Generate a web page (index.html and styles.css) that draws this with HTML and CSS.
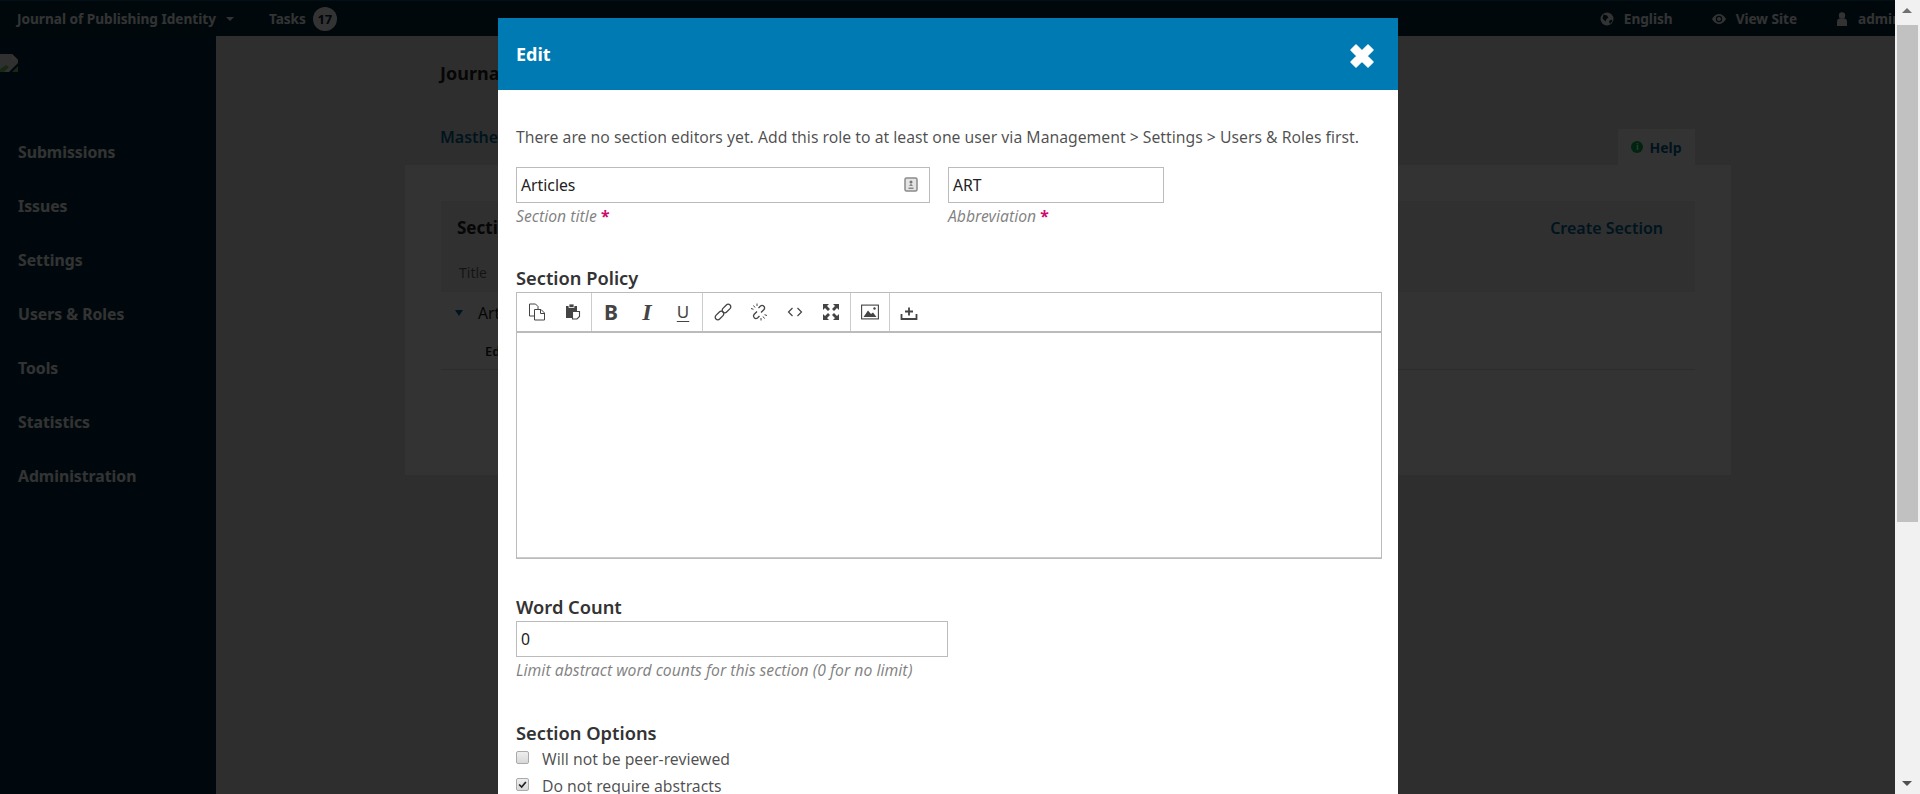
FILE: index.html
```html
<!DOCTYPE html>
<html lang="en">
<head>
    <meta charset="UTF-8">
    <title>Sections - Journal of Publishing Identity</title>
    <link rel="stylesheet" href="styles.css">
</head>
<body>
<div class="window">
    <div class="app">
        <header class="topbar">
            <div class="topbar-left">
                <span class="journal-name">Journal of Publishing Identity</span>
                <span class="caret"></span>
                <span class="tasks">Tasks</span>
                <span class="badge">17</span>
            </div>
            <div class="topbar-right">
                <span class="top-link">
                    <svg class="top-icon" viewBox="0 0 14 14"><circle cx="7" cy="7" r="6.500" fill="#fff"/><path d="M3.500 2.500l3.500 1 1.500 2-2 1.500-1 2.500-3-3zM9 9l2.500-1.500L12.500 9 10 12z" fill="#00293d"/></svg>
                    English
                </span>
                <span class="top-link">
                    <svg class="top-icon" viewBox="0 0 14 14"><path d="M0 7c2-3.500 4.500-5 7-5s5 1.500 7 5c-2 3.500-4.500 5-7 5s-5-1.500-7-5z" fill="#fff"/><circle cx="7" cy="7" r="3.200" fill="#00293d"/><circle cx="7" cy="7" r="2" fill="#fff"/></svg>
                    View Site
                </span>
                <span class="top-link top-link-user">
                    <svg class="top-icon" viewBox="0 0 12 14"><circle cx="6" cy="3.500" r="3.200" fill="#fff"/><path d="M1 14V9.500C1 7.500 2.500 6.500 3.500 6.500h5c1 0 2.500 1 2.500 3V14z" fill="#fff"/></svg>
                    admin
                </span>
            </div>
        </header>
        <div class="below">
            <nav class="sidebar">
                <svg class="broken" viewBox="0 0 18 18"><path d="M0 0h12l6 6v3L9 18H0z" fill="#efefef"/><path d="M0 18v-3l6-4 3 2-5 5zM18 12v6h-6z" fill="#7fc06a"/><path d="M12 0v6h6z" fill="#fff"/></svg>
                <ul class="nav-list">
                    <li>Submissions</li>
                    <li>Issues</li>
                    <li>Settings</li>
                    <li>Users &amp; Roles</li>
                    <li>Tools</li>
                    <li>Statistics</li>
                    <li>Administration</li>
                </ul>
            </nav>
            <main class="content">
                <h1 class="page-title">Journal</h1>
                <div class="tabs">
                    <span class="tab-link">Masthead</span>
                    <span class="help-tab"><span class="help-dot">i</span>Help</span>
                </div>
                <section class="card">
                    <div class="grid-head">
                        <div class="grid-title-row">
                            <strong>Sections</strong>
                            <span class="create-link">Create Section</span>
                        </div>
                        <div class="grid-col">Title</div>
                    </div>
                    <div class="grid-row"><span class="tri"></span>Articles</div>
                    <div class="grid-sub">Edit</div>
                </section>
            </main>
        </div>
        <div class="dim"></div>
        <div class="modal">
            <div class="modal-head">
                <span class="modal-title">Edit</span>
                <svg class="modal-close" viewBox="0 0 26 26"><path d="M7 2l6 6 6-6 5 5-6 6 6 6-5 5-6-6-6 6-5-5 6-6-6-6z" fill="#fff" stroke="#fff" stroke-width="1.500" stroke-linejoin="round"/></svg>
            </div>
            <form class="modal-body">
                <p class="notice">There are no section editors yet. Add this role to at least one user via Management &gt; Settings &gt; Users &amp; Roles first.</p>
                <div class="field-row">
                    <div class="field">
                        <div class="input input-title">Articles
                            <svg class="locale-icon" viewBox="0 0 14 15"><rect x="1" y="1" width="12" height="13" rx="1.500" fill="#e4e4e4" stroke="#8a8a8a" stroke-width="1.500"/><circle cx="7" cy="5" r="1.500" fill="#777"/><path d="M5 9l2-2.500L9 9zM4.500 10.500h5v1.500h-5z" fill="#888"/></svg>
                        </div>
                        <div class="hint">Section title <span class="req">*</span></div>
                    </div>
                    <div class="field">
                        <div class="input input-abbrev">ART</div>
                        <div class="hint">Abbreviation <span class="req">*</span></div>
                    </div>
                </div>

                <h3 class="sub-head head-policy">Section Policy</h3>
                <div class="editor">
                    <div class="toolbar">
                        <div class="tb-group">
                            <span class="tb-btn"><svg viewBox="0 0 18 18"><path d="M1.500 1h6l2.500 2.500v3M1.500 1v12h5M6.500 6.500h6.500l3.500 3.500v7h-10zM12.500 6.500V10.500h4" fill="none" stroke="#444" stroke-width="1"/></svg></span>
                            <span class="tb-btn"><svg viewBox="0 0 18 18"><path d="M2 3h11v5H8v7H2z" fill="#444"/><rect x="5" y="1" width="5" height="3.500" fill="#444" stroke="#fff" stroke-width=".8"/><path d="M8.500 8.500h7v5l-2.500 2.500H8.500z" fill="#fff" stroke="#444" stroke-width="1.100"/></svg></span>
                        </div>
                        <div class="tb-group">
                            <span class="tb-btn tb-text tb-bold">B</span>
                            <span class="tb-btn tb-text tb-italic">I</span>
                            <span class="tb-btn tb-text tb-under">U</span>
                        </div>
                        <div class="tb-group tb-group-wide">
                            <span class="tb-btn"><svg viewBox="0 0 18 18"><g fill="none" stroke="#444" stroke-width="1.300"><rect x="-5" y="-2.600" width="10" height="5.200" rx="2.600" transform="translate(5.500 12.500) rotate(-45)"/><rect x="-5" y="-2.600" width="10" height="5.200" rx="2.600" transform="translate(12.500 5.500) rotate(-45)"/></g></svg></span>
                            <span class="tb-btn"><svg viewBox="0 0 18 18"><g fill="none" stroke="#444" stroke-width="1.300"><path d="M7 8.500l-3 3a2.500 2.500 0 0 0 3.500 3.500l2-2"/><path d="M11 9.500l3-3a2.500 2.500 0 0 0-3.500-3.500l-2 2"/></g><path d="M3.500 2.500l1.500 2M1 5.500l2.500.8M7 .5v2.500M14.500 15.500l-1.500-2M17 12.500l-2.500-.8M11 17.500V15" stroke="#444" stroke-width="1"/></svg></span>
                            <span class="tb-btn"><svg viewBox="0 0 18 18"><path d="M6.500 5L2.500 9l4 4M11.500 5l4 4-4 4" fill="none" stroke="#444" stroke-width="1.200"/></svg></span>
                            <span class="tb-btn"><svg viewBox="0 0 18 18"><path d="M1 1h6L5 3l3 3-2 2-3-3-2 2zM17 1v6l-2-2-3 3-2-2 3-3-2-2zM1 17v-6l2 2 3-3 2 2-3 3 2 2zM17 17h-6l2-2-3-3 2-2 3 3 2-2z" fill="#444"/></svg></span>
                        </div>
                        <div class="tb-group">
                            <span class="tb-btn"><svg viewBox="0 0 18 18"><rect x=".6" y="2.100" width="16.800" height="13.800" fill="none" stroke="#444" stroke-width="1.100"/><path d="M2.500 14l4.500-6.500 3 3.500 2-1.500 3.500 4.500z" fill="#444"/><circle cx="13.500" cy="5.500" r="1.200" fill="#444"/></svg></span>
                        </div>
                        <div class="tb-group">
                            <span class="tb-btn"><svg viewBox="0 0 18 18"><path d="M1.500 11v5h15v-5" fill="none" stroke="#444" stroke-width="1.800"/><path d="M9 4.500v8M5 8.500h8" stroke="#444" stroke-width="1.800"/></svg></span>
                        </div>
                    </div>
                    <div class="editor-area"></div>
                </div>

                <h3 class="sub-head head-count">Word Count</h3>
                <div class="input input-count">0</div>
                <div class="hint">Limit abstract word counts for this section (0 for no limit)</div>

                <h3 class="sub-head head-options">Section Options</h3>
                <label class="check"><span class="box"></span>Will not be peer-reviewed</label>
                <label class="check"><span class="box box-on"><svg viewBox="0 0 13 13"><path d="M2.500 6.500l3 3 5-6" fill="none" stroke="#222" stroke-width="2"/></svg></span>Do not require abstracts</label>
            </form>
        </div>
    </div>
    <div class="scrollbar">
        <span class="arrow-up"></span>
        <span class="thumb"></span>
        <span class="arrow-down"></span>
    </div>
</div>
</body>
</html>
```
FILE: styles.css
```css
html, body { margin: 0; height: 794px; overflow: hidden; }
body { font-family: "Noto Sans", sans-serif; font-size: 14px; color: #222; }
ul { list-style: none; margin: 0; padding: 0; }
h1, h3, p { margin: 0; }

.window { display: flex; height: 794px; }
.app { position: relative; flex: 1; min-width: 0; overflow: hidden; background: #e6e6e6; display: flex; flex-direction: column; }

/* top bar */
.topbar { height: 36px; flex: none; box-sizing: border-box; border-top: 1px solid #0a4a6e; background: #00293d; color: #fff; display: flex; justify-content: space-between; align-items: center; padding-left: 17px; font-size: 13.600px; font-weight: 700; }
.topbar-left, .topbar-right { display: flex; align-items: center; }
.caret { margin-left: 10px; border: 4px solid transparent; border-top-color: #fff; border-bottom: 0; }
.tasks { margin-left: 35px; }
.badge { margin-left: 7px; width: 24px; height: 24px; border-radius: 50%; background: #fff; color: #00293d; text-align: center; line-height: 24px; font-size: 13px; }
.topbar-right { margin-right: -6px; }
.top-link { display: flex; align-items: center; gap: 10px; margin-left: 39px; white-space: nowrap; }
.top-icon { width: 14px; height: 14px; }
.top-link-user .top-icon { width: 12px; }

/* sidebar */
.below { flex: 1; display: flex; min-height: 0; }
.sidebar { width: 216px; flex: none; background: #002c40; color: #fff; }
.broken { display: block; width: 18px; height: 18px; margin-top: 18px; }
.nav-list { margin-top: 53px; padding-left: 18px; }
.nav-list li { height: 54px; line-height: 54px; font-size: 15.750px; font-weight: 700; }

/* page behind the dialog */
.content { flex: 1; min-width: 0; padding-left: 189px; }
.page-title { font-size: 18px; font-weight: 700; margin: 26px 0 0 35px; line-height: 22px; color: #222; }
.tabs { display: flex; justify-content: space-between; align-items: flex-start; height: 81px; width: 1255px; margin-left: 35px; font-weight: 600; color: #006798; font-size: 16px; }
.tab-link { line-height: 28px; margin-top: 39px; }
.help-tab { margin-top: 45px; height: 36px; width: 77px; background: #fff; display: flex; align-items: center; justify-content: center; gap: 6px; font-size: 14px; font-weight: 700; }
.help-dot { width: 12px; height: 12px; border-radius: 50%; background: #00b24e; color: #fff; font-size: 9px; line-height: 12px; text-align: center; }
.card { width: 1326px; height: 310px; box-sizing: border-box; background: #fff; padding: 36px 36px 0 36px; }
.grid-head { height: 91px; background: #eee; box-sizing: border-box; padding: 16px 32px 0 16px; }
.grid-title-row { display: flex; justify-content: space-between; font-size: 17px; line-height: 22px; }
.create-link { font-weight: 600; color: #006798; font-size: 16px; }
.grid-col { margin-top: 24px; font-size: 14px; color: rgba(0,0,0,.6); padding-left: 2px; }
.grid-row { display: flex; align-items: center; height: 42px; padding-left: 14px; font-size: 15.750px; }
.tri { margin-right: 15px; border: 4px solid transparent; border-top: 6px solid #006798; border-bottom: 0; }
.grid-sub { height: 35px; line-height: 34px; padding-left: 44px; font-size: 13px; font-weight: 600; border-bottom: 1px solid #ddd; }

.dim { position: absolute; inset: 0; background: rgba(0, 0, 0, .8); }

/* dialog */
.modal { position: absolute; top: 18px; left: 498px; width: 900px; background: #fff; border-radius: 2px 2px 0 0; }
.modal-head { height: 72px; background: #007ab2; color: #fff; display: flex; align-items: center; justify-content: space-between; padding: 0 23px 0 18px; }
.modal-title { font-size: 18px; font-weight: 700; }
.modal-close { width: 26px; height: 26px; margin-top: 3px; }
.modal-body { padding: 36px 18px 0; }
.notice { font-size: 15.750px; line-height: 22px; color: rgba(0,0,0,.7); height: 26px; white-space: nowrap; }
.field-row { display: flex; gap: 18px; margin-top: 15px; }
.input { box-sizing: border-box; height: 36px; line-height: 34px; border: 1px solid #bbb; padding-left: 4px; font-size: 15.750px; color: #222; position: relative; }
.input-title { width: 414px; }
.input-abbrev { width: 216px; }
.input-count { width: 432px; }
.locale-icon { position: absolute; right: 11px; top: 9px; width: 14px; height: 15px; }
.hint { font-size: 15.750px; font-style: italic; color: rgba(0,0,0,.5); line-height: 24px; padding-top: 1px; }
.req { color: #d00a6c; font-weight: 700; font-style: normal; }
.sub-head { font-size: 18.300px; font-weight: 600; line-height: 22px; color: #333; }
.head-policy { margin-top: 39px; }
.head-count { margin-top: 37px; margin-bottom: 3px; }
.head-options { margin-top: 40px; margin-bottom: 1px; }

/* rich text editor */
.editor { width: 864px; border: 1px solid #bbb; margin-top: 3px; }
.toolbar { display: flex; height: 38px; border-bottom: 2px solid #bbb; padding-left: 2px; }
.tb-group { display: flex; align-items: center; padding: 0 1px; border-right: 1px solid #ccc; }
.tb-group:first-child { padding: 0; }
.tb-group:last-child { border-right: 0; }
.tb-group-wide { padding-left: 2px; }
.tb-btn { width: 36px; height: 38px; display: flex; align-items: center; justify-content: center; color: #444; }
.tb-btn svg { width: 18px; height: 18px; }
.tb-text { font-size: 21px; line-height: 18px; }
.tb-bold { font-weight: 700; }
.tb-italic { font-family: "Liberation Serif", serif; font-style: italic; font-weight: 700; font-size: 24px; }
.tb-under { font-size: 17px; text-decoration: underline; text-underline-offset: 3px; }
.editor-area { height: 224px; border-bottom: 1px solid #ccc; }

/* checkboxes */
.check { display: flex; align-items: center; height: 27px; color: rgba(0,0,0,.7); font-size: 15.750px; }
.box { box-sizing: border-box; width: 13px; height: 13px; margin: -2px 13px 0 0; border: 1px solid #aaa; border-radius: 2px; background: linear-gradient(#eee, #d8d8d8); flex: none; }
.box svg { display: block; width: 11px; height: 11px; }

/* scrollbar */
.scrollbar { position: relative; width: 25px; flex: none; background: #f1f1f1; }
.thumb { position: absolute; left: 2px; right: 2px; top: 25px; height: 497px; background: #c1c1c1; }
.arrow-up, .arrow-down { position: absolute; left: 7px; border: 5.500px solid transparent; }
.arrow-up { top: 8px; border-bottom-color: #707070; border-top: 0; }
.arrow-down { bottom: 8px; border-top-color: #505050; border-bottom: 0; }
```
